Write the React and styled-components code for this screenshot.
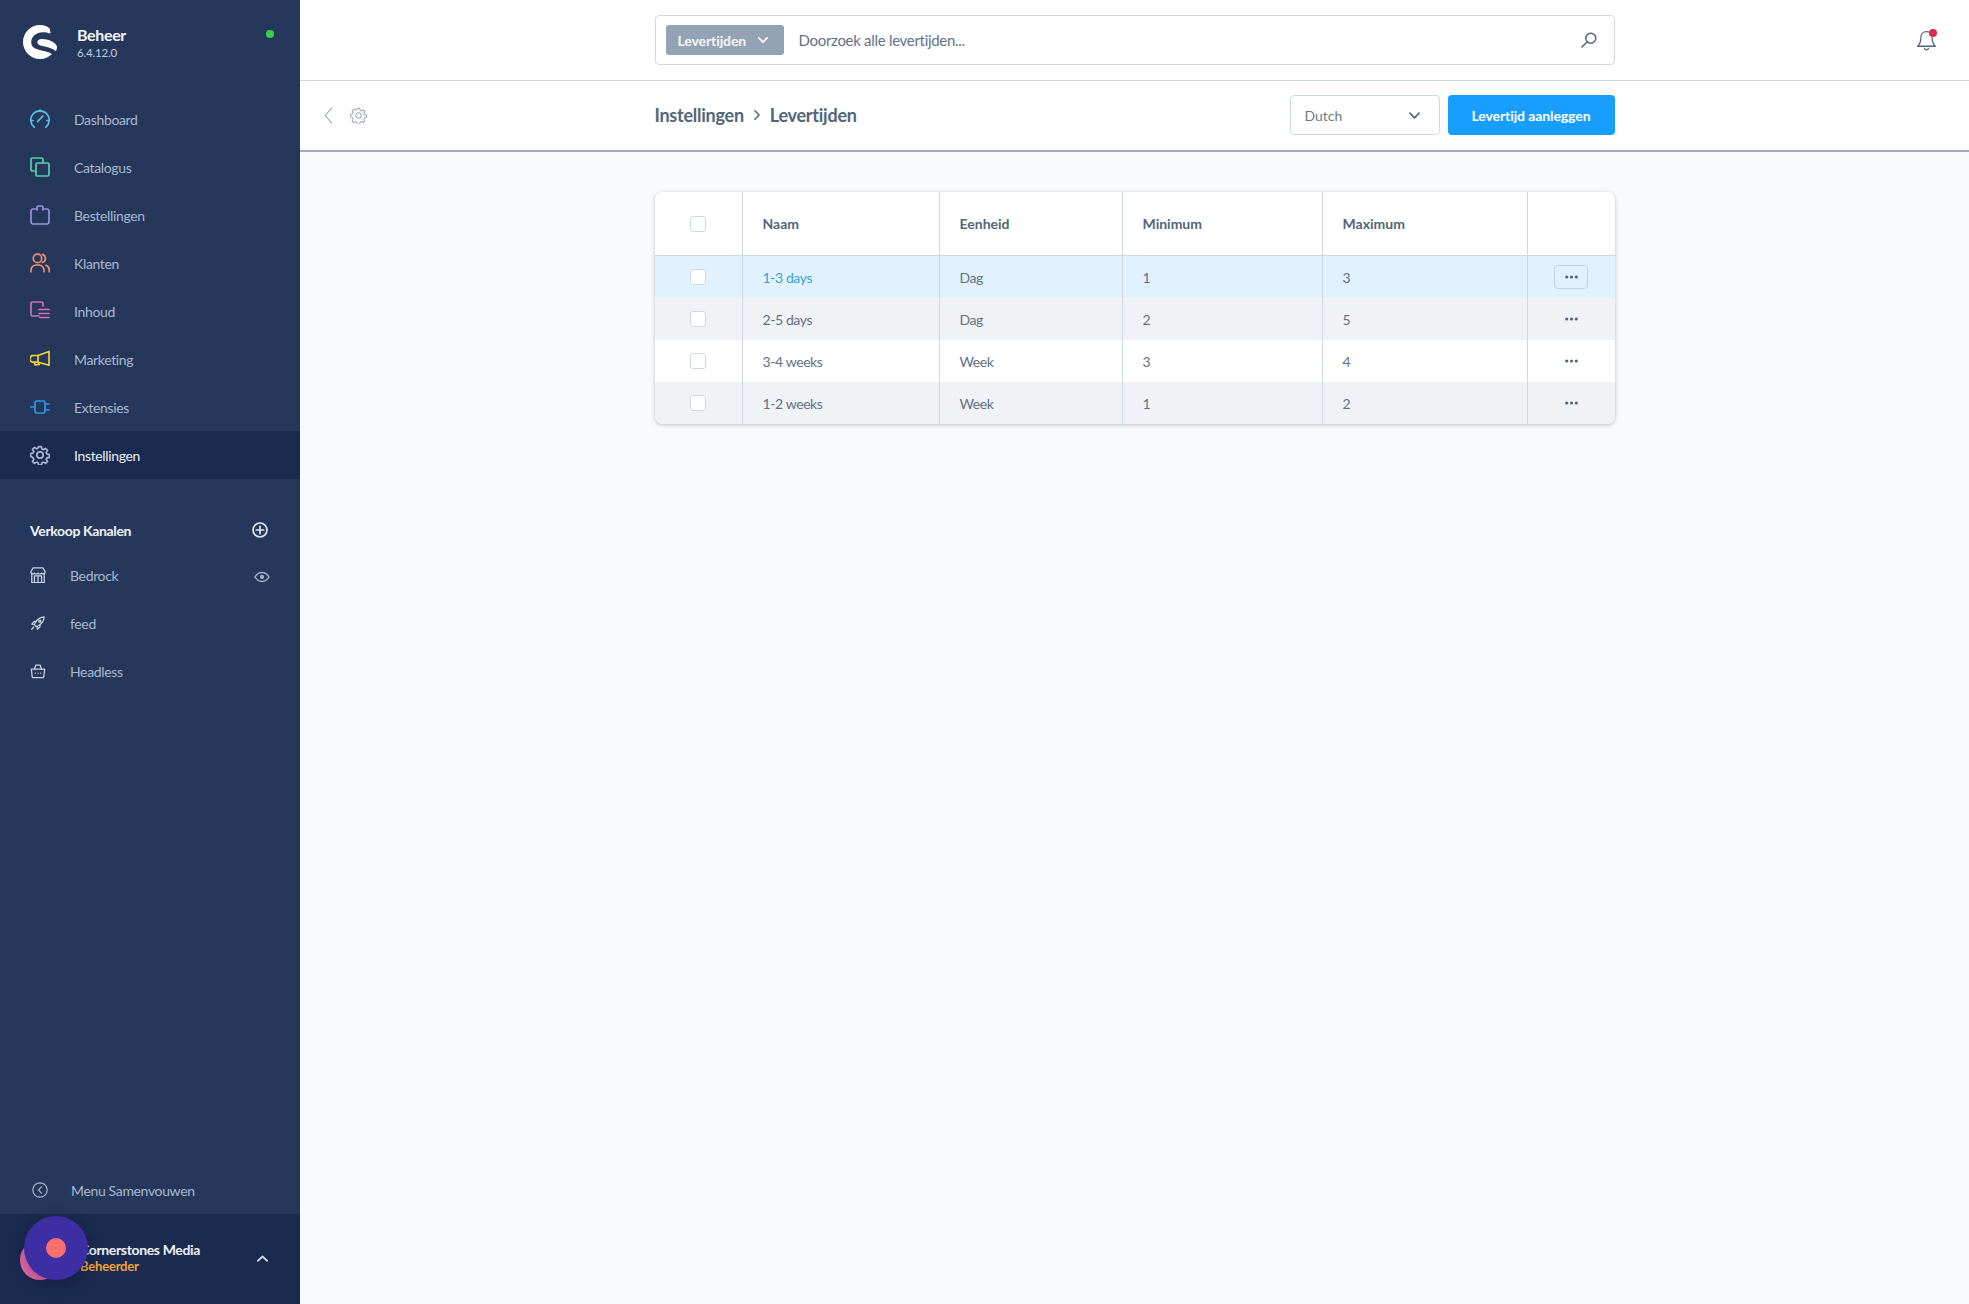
import React from "react";
import styled, { createGlobalStyle } from "styled-components";

const columns = "88px 197px 183px 200px 205px 87px";

const rows = [
  { naam: "1-3 days", eenheid: "Dag", min: 1, max: 3, hover: true },
  { naam: "2-5 days", eenheid: "Dag", min: 2, max: 5 },
  { naam: "3-4 weeks", eenheid: "Week", min: 3, max: 4 },
  { naam: "1-2 weeks", eenheid: "Week", min: 1, max: 2 },
];

const GearPath = () => (
  <>
    <path d="M8.6 2h2.8l.5 2.4 1.5.7 2.1-1.3 2 2-1.3 2.1.7 1.5 2.4.5v2.8l-2.4.5-.7 1.5 1.3 2.1-2 2-2.1-1.3-1.5.7-.5 2.4H8.6l-.5-2.4-1.5-.7-2.1 1.3-2-2 1.3-2.1-.7-1.5L.7 11.7V8.9l2.4-.5.7-1.5-1.3-2.1 2-2 2.1 1.3 1.5-.7z" transform="translate(0 -.4)" />
    <circle cx="10" cy="10" r="3.2" />
  </>
);

const menuItems = [
  {
    label: "Dashboard",
    color: "#57c0e4",
    icon: (
      <>
        <path d="M4.2 18.2A9.2 9.2 0 1 1 15.8 18.2" />
        <path d="M1.5 11.5H3M17 11.5h1.5M10 1v1.5M7.6 12.6 13 6.8" />
      </>
    ),
  },
  {
    label: "Catalogus",
    color: "#57cfa7",
    icon: (
      <>
        <path d="M5 14H2.5A1.5 1.5 0 0 1 1 12.5v-10A1.5 1.5 0 0 1 2.5 1h9A1.5 1.5 0 0 1 13 2.5V6" />
        <rect x="6" y="6" width="13" height="13" rx="1.6" />
      </>
    ),
  },
  {
    label: "Bestellingen",
    color: "#9a90e0",
    icon: (
      <>
        <path d="M5.5 4H2.4L1 5.4v12.2L2.4 19h15.2l1.4-1.4V5.4L17.6 4h-3.1" />
        <path d="M7 5V2.4C7 1.5 7.6 1 8.4 1h3.2c.8 0 1.4.5 1.4 1.4V5" />
      </>
    ),
  },
  {
    label: "Klanten",
    color: "#ea9172",
    icon: (
      <>
        <circle cx="7.5" cy="5.4" r="4.2" />
        <path d="M1 18.8v-1.6A5.2 5.2 0 0 1 6.2 12h2.6a5.2 5.2 0 0 1 5.2 5.2v1.6" />
        <path d="M12.5 1.4a4.2 4.2 0 0 1 0 8M16 12.3a4.8 4.8 0 0 1 3.2 4.7v1.8" />
      </>
    ),
  },
  {
    label: "Inhoud",
    color: "#d36fb4",
    icon: (
      <>
        <path d="M9 15H2.5A1.5 1.5 0 0 1 1 13.5v-11A1.5 1.5 0 0 1 2.5 1h9A1.5 1.5 0 0 1 13 2.5V5" />
        <path d="M9 8.5h10M9 12.5h10M10 16.5h9" />
      </>
    ),
  },
  {
    label: "Marketing",
    color: "#f4d23f",
    icon: (
      <>
        <path d="M8 6.5 19 2.5v13.8L8 13.2H2.2L0 11.5v-3l2.2-2z" />
        <path d="M8 6.5v6.7M4 13.4l1.3 2.6 4-.6-1.1-2" />
      </>
    ),
  },
  {
    label: "Extensies",
    color: "#2d97e6",
    icon: (
      <>
        <rect x="5" y="4" width="10" height="12" rx="1.6" />
        <path d="M0 10h5M15 7h4M15 13h4" />
      </>
    ),
  },
  {
    label: "Instellingen",
    color: "#a8b7d0",
    active: true,
    icon: <GearPath />,
  },
];

const channels = [
  {
    label: "Bedrock",
    eye: true,
    icon: (
      <>
        <path d="M2 7v10.5h14V7" />
        <path d="M3.5 1h11L17 5.2a2.2 2.2 0 0 1-4 1.6 2.4 2.4 0 0 1-4 0 2.4 2.4 0 0 1-4 0 2.2 2.2 0 0 1-4-1.6z" />
        <path d="M5 17.5V10h8v7.5M9 10v7.5" />
      </>
    ),
  },
  {
    label: "feed",
    icon: (
      <>
        <path d="M6.5 12.5 4.8 10.8C6.5 6 10.5 2.5 16 2c-.4 5.400-3.900 9.300-8.700 11z" />
        <path d="M5 10.500 2 10.200 4.800 7.200l2.500.2M8 13l.3 3 3-2.800-.2-2.500M4.200 13.500 2 16" />
        <circle cx="11" cy="7" r="1.200" />
      </>
    ),
  },
  {
    label: "Headless",
    icon: (
      <>
        <path d="M1.500 7h15l-1 8.600a1 1 0 0 1-1 .9H3.500a1 1 0 0 1-1-.9z" />
        <path d="M5 7 6.500 2.500h5L13 7M6 11.500h.01M9 11.500h.01M12 11.500h.01" />
      </>
    ),
  },
];

export default function App() {
  return (
    <>
      <GlobalStyle />
      <Page>
        <Sidebar>
          <Brand>
            <Logo viewBox="0 0 34 34" aria-hidden="true">
              <path d="M26.500 3.200C23.800 1.100 20.600 0 17 0 7.600 0 0 7.600 0 17s7.600 17 17 17c4.700 0 8.900-1.900 12-5-3.500-2-8.300-3-13-4.200-4.600-1.200-7.800-3.100-7.800-7.600C8.200 11.500 13.500 7.200 19.800 7.200c2.600 0 5.200.5 7 1.200.6.200.9-.3.700-.8z" />
              <path d="M14.300 17.200c0-2 1.800-3.300 4.500-3.300 6.200 0 15.200 3.500 15.200 8.200 0 1.600-.5 3-1.100 4-3.600-2.800-7.800-3.800-12.200-4.800-3.700-.8-6.400-1.900-6.400-4.100z" />
            </Logo>
            <BrandText>
              <BrandName>Beheer</BrandName>
              <BrandVersion>6.4.12.0</BrandVersion>
            </BrandText>
            <StatusDot />
          </Brand>

          <Menu>
            {menuItems.map((item) => (
              <MenuItem key={item.label} $active={item.active}>
                <MenuIcon viewBox="0 0 20 20" $color={item.color}>
                  {item.icon}
                </MenuIcon>
                {item.label}
              </MenuItem>
            ))}
          </Menu>

          <ChannelHeading>
            Verkoop Kanalen
            <PlainIcon viewBox="0 0 16 16" $size={16} $color="#dfe6f1" $weight={1.7}>
              <circle cx="8" cy="8" r="7" />
              <path d="M8 4.300v7.400M4.300 8h7.400" />
            </PlainIcon>
          </ChannelHeading>

          {channels.map((channel) => (
            <Channel key={channel.label}>
              <PlainIcon viewBox="0 0 18 18" $size={16} $color="#c9d5e8" $weight={1.4}>
                {channel.icon}
              </PlainIcon>
              <ChannelLabel>{channel.label}</ChannelLabel>
              {channel.eye && (
                <EyeIcon viewBox="0 0 16 12" $size={16} $color="#9fb0cb" $weight={1.5}>
                  <path d="M1 6c1.700-3 4-4.500 7-4.500S13.300 3 15 6c-1.700 3-4 4.500-7 4.500S2.700 9 1 6z" />
                  <circle cx="8" cy="6" r="1.400" fill="#9fb0cb" />
                </EyeIcon>
              )}
            </Channel>
          ))}

          <Spacer />

          <Collapse>
            <PlainIcon viewBox="0 0 16 16" $size={16} $color="#a8b7d0" $weight={1.2}>
              <circle cx="8" cy="8" r="7.200" />
              <path d="M9.500 4.800 6.500 8l3 3.200" />
            </PlainIcon>
            Menu Samenvouwen
          </Collapse>

          <UserBar>
            <UserAvatar />
            <UserText>
              <UserName>Cornerstones Media</UserName>
              <UserRole>Beheerder</UserRole>
            </UserText>
            <PlainIcon viewBox="0 0 12 8" $size={11} $color="#c9d5e8" $weight={2}>
              <path d="M1 6.500 6 1.800l5 4.700" />
            </PlainIcon>
          </UserBar>
        </Sidebar>

        <Main>
          <TopBar>
            <SearchBox>
              <SearchType>
                Levertijden
                <PlainIcon viewBox="0 0 12 8" $size={10} $color="#fff" $weight={2}>
                  <path d="M1 1.500 6 6.500l5-5" />
                </PlainIcon>
              </SearchType>
              <SearchInput placeholder="Doorzoek alle levertijden..." />
              <PlainIcon viewBox="0 0 16 16" $size={16} $color="#52667a" $weight={1.500}>
                <circle cx="9.800" cy="6.200" r="5" />
                <path d="M6.200 9.800 1 15" />
              </PlainIcon>
            </SearchBox>
            <BellCell>
              <BellWrap>
                <PlainIcon viewBox="0 0 20 22" $size={23} $color="#52667a" $weight={1.200}>
                  <path d="M10 2.500c-3.400 0-5.400 2.600-5.400 5.800 0 4.400-1.100 6.400-3.100 8.200h17c-2-1.800-3.100-3.800-3.100-8.200 0-3.200-2-5.800-5.400-5.800zM8 18.500c.4 1 1.100 1.500 2 1.500s1.600-.5 2-1.500" />
                </PlainIcon>
                <BellBadge />
              </BellWrap>
            </BellCell>
          </TopBar>

          <SmartBar>
            <BackCell>
              <PlainIcon viewBox="0 0 10 18" $size={17} $color="#9aa8b5" $weight={1.200}>
                <path d="M8.500 1 1.500 9l7 8" />
              </PlainIcon>
              <PlainIcon viewBox="0 0 20 20" $size={17} $color="#9aa8b5" $weight={1.200}>
                <GearPath />
              </PlainIcon>
            </BackCell>
            <SmartInner>
              <Crumbs>
                Instellingen
                <PlainIcon viewBox="0 0 8 12" $size={10} $color="#52667a" $weight={1.800}>
                  <path d="M1.500 1 6.500 6l-5 5" />
                </PlainIcon>
                Levertijden
              </Crumbs>
              <LangSelect>
                Dutch
                <PlainIcon viewBox="0 0 12 8" $size={11} $color="#52667a" $weight={1.800}>
                  <path d="M1 1.500 6 6.500l5-5" />
                </PlainIcon>
              </LangSelect>
              <PrimaryButton>Levertijd aanleggen</PrimaryButton>
            </SmartInner>
          </SmartBar>

          <Content>
            <Card>
              <HeadRow>
                <CheckCell><CheckBox /></CheckCell>
                <HeadCell>Naam</HeadCell>
                <HeadCell>Eenheid</HeadCell>
                <HeadCell>Minimum</HeadCell>
                <HeadCell>Maximum</HeadCell>
                <ActionCell />
              </HeadRow>
              {rows.map((row, i) => (
                <BodyRow key={row.naam} $hover={row.hover} $even={i % 2 === 1}>
                  <CheckCell><CheckBox /></CheckCell>
                  <Cell $link={row.hover}>{row.naam}</Cell>
                  <Cell>{row.eenheid}</Cell>
                  <Cell>{row.min}</Cell>
                  <Cell>{row.max}</Cell>
                  <ActionCell>
                    <DotsButton $outlined={row.hover}>
                      <svg viewBox="0 0 13 4" width="13" height="4" fill="#52667a">
                        <circle cx="1.700" cy="2" r="1.600" />
                        <circle cx="6.500" cy="2" r="1.600" />
                        <circle cx="11.300" cy="2" r="1.600" />
                      </svg>
                    </DotsButton>
                  </ActionCell>
                </BodyRow>
              ))}
            </Card>
          </Content>
        </Main>

        <ChatBubble>
          <ChatDot />
        </ChatBubble>
      </Page>
    </>
  );
}

const GlobalStyle = createGlobalStyle`
  html, body {
    margin: 0;
    padding: 0;
    height: 100%;
  }
  body {
    font-family: "Lato", "Open Sans", sans-serif;
    font-size: 14px;
    color: #52667a;
    background: #f9fafb;
  }
  * {
    box-sizing: border-box;
  }
`;

const Page = styled.div`
  display: grid;
  grid-template-columns: 300px 1fr;
  height: 100vh;
  overflow: hidden;
`;

const Sidebar = styled.aside`
  display: flex;
  flex-direction: column;
  background: #25375a;
  color: #a8b7d0;
  letter-spacing: -0.35px;
`;

const Brand = styled.div`
  display: flex;
  align-items: flex-start;
  height: 95px;
  padding: 25px 26px 0 23px;
`;

const Logo = styled.svg`
  width: 34px;
  height: 34px;
  fill: #fff;
  flex: none;
`;

const BrandText = styled.div`
  margin-left: 20px;
  flex: 1;
`;

const BrandName = styled.div`
  color: #f4f6fa;
  font-size: 16px;
  font-weight: 700;
  line-height: 20px;
`;

const BrandVersion = styled.div`
  font-size: 11.5px;
  line-height: 15px;
  letter-spacing: -0.2px;
  color: #c2cddd;
`;

const StatusDot = styled.span`
  width: 8px;
  height: 8px;
  margin-top: 5px;
  border-radius: 50%;
  background: #37d046;
`;

const Menu = styled.nav`
  display: flex;
  flex-direction: column;
`;

const MenuItem = styled.a`
  display: flex;
  align-items: center;
  gap: 24px;
  height: 48px;
  padding-left: 30px;
  color: ${(p) => (p.$active ? "#e9eef6" : "#a8b7d0")};
  background: ${(p) => (p.$active ? "#1a2b4f" : "transparent")};
`;

const MenuIcon = styled.svg`
  width: 20px;
  height: 20px;
  flex: none;
  fill: none;
  stroke: ${(p) => p.$color};
  stroke-width: 1.7;
  stroke-linecap: round;
  stroke-linejoin: round;
`;

const PlainIcon = styled.svg`
  width: ${(p) => p.$size}px;
  height: ${(p) => p.$size}px;
  flex: none;
  fill: none;
  stroke: ${(p) => p.$color};
  stroke-width: ${(p) => p.$weight};
  stroke-linecap: round;
  stroke-linejoin: round;
`;

const ChannelHeading = styled.div`
  display: flex;
  align-items: center;
  justify-content: space-between;
  height: 24px;
  margin: 39px 0 9px;
  padding: 0 32px 0 30px;
  font-weight: 700;
  color: #f0f3f8;
`;

const Channel = styled.a`
  display: flex;
  align-items: center;
  gap: 24px;
  height: 48px;
  padding: 0 30px;
`;

const ChannelLabel = styled.span`
  flex: 1;
`;

const EyeIcon = styled(PlainIcon)`
  margin-top: 4px;
`;

const Spacer = styled.div`
  flex: 1;
`;

const Collapse = styled.a`
  display: flex;
  align-items: center;
  gap: 23px;
  height: 48px;
  padding-left: 32px;
`;

const UserBar = styled.div`
  display: flex;
  align-items: center;
  height: 90px;
  padding: 0 32px 2px 20px;
  background: #1a2b4f;
`;

const UserAvatar = styled.div`
  width: 40px;
  height: 40px;
  margin-top: 4px;
  flex: none;
  border-radius: 50%;
  background: #e96aae;
`;

const UserText = styled.div`
  flex: 1;
  margin-left: 20px;
`;

const UserName = styled.div`
  font-weight: 700;
  line-height: 17px;
  color: #eef2f7;
`;

const UserRole = styled.div`
  font-size: 13px;
  font-weight: 700;
  line-height: 17px;
  letter-spacing: -0.2px;
  color: #f0a33a;
`;

const Main = styled.main`
  display: flex;
  flex-direction: column;
  min-width: 0;
`;

const TopBar = styled.header`
  display: grid;
  grid-template-columns: 1fr 960px 1fr;
  align-items: center;
  height: 81px;
  background: #fff;
  border-bottom: 1px solid #d1d9e0;

  > :first-child {
    grid-column: 2;
  }
`;

const SearchBox = styled.div`
  display: flex;
  align-items: center;
  height: 50px;
  padding: 0 17px 0 10px;
  border: 1px solid #d1d9e0;
  border-radius: 4px;
  background: #fff;
`;

const SearchType = styled.div`
  display: flex;
  align-items: center;
  justify-content: space-between;
  width: 118px;
  height: 30px;
  padding: 0 16px 0 12px;
  border-radius: 3px;
  background: #94a3b3;
  color: #f4f6f8;
  font-size: 14px;
  font-weight: 700;
  letter-spacing: -0.1px;
  flex: none;
`;

const SearchInput = styled.input`
  flex: 1;
  min-width: 0;
  height: 100%;
  margin-left: 15px;
  padding: 0;
  border: none;
  outline: none;
  background: transparent;
  font: inherit;
  font-size: 15px;
  letter-spacing: -0.3px;
  color: #52667a;

  &::placeholder {
    color: #5f7285;
    opacity: 1;
  }
`;

const BellCell = styled.div`
  display: flex;
  justify-content: flex-end;
  padding-right: 31px;
`;

const BellWrap = styled.div`
  position: relative;
  width: 23px;
  height: 23px;
`;

const BellBadge = styled.span`
  position: absolute;
  top: 0;
  right: 1px;
  width: 8px;
  height: 8px;
  border-radius: 50%;
  background: #de294c;
`;

const SmartBar = styled.div`
  display: grid;
  grid-template-columns: 1fr 960px 1fr;
  align-items: center;
  height: 71px;
  padding-bottom: 1px;
  background: #fff;
  border-bottom: 2px solid #a2adb8;
`;

const BackCell = styled.div`
  display: flex;
  align-items: center;
  gap: 13px;
  padding-left: 20px;
`;

const SmartInner = styled.div`
  display: flex;
  align-items: center;
`;

const Crumbs = styled.div`
  display: flex;
  align-items: center;
  flex: 1;
  gap: 8px;
  font-size: 18px;
  font-weight: 700;
  letter-spacing: -0.25px;
  color: #52667a;
`;

const LangSelect = styled.div`
  display: flex;
  align-items: center;
  justify-content: space-between;
  width: 150px;
  height: 40px;
  padding: 0 19px 0 14px;
  border: 1px solid #d1d9e0;
  border-radius: 4px;
  background: #fff;
  color: #6b7c8e;
`;

const PrimaryButton = styled.button`
  width: 167px;
  height: 40px;
  margin-left: 8px;
  padding: 0;
  border: none;
  border-radius: 4px;
  background: #189eff;
  color: #fff;
  font: inherit;
  font-weight: 700;
  letter-spacing: -0.1px;
  cursor: pointer;
`;

const Content = styled.div`
  flex: 1;
  display: flex;
  justify-content: center;
  padding-top: 40px;
  background: #f9fafb;
`;

const Card = styled.div`
  width: 960px;
  align-self: flex-start;
  border-radius: 8px;
  overflow: hidden;
  background: #fff;
  box-shadow: 0 1px 4px rgba(70, 85, 105, 0.35);
`;

const HeadRow = styled.div`
  display: grid;
  grid-template-columns: ${columns};
  height: 64px;
  border-bottom: 1px solid #d1d9e0;
  background: #fff;

  > * {
    border-right: 1px solid #d1d9e0;
  }
  > :last-child {
    border-right: none;
  }
`;

const BodyRow = styled.div`
  display: grid;
  grid-template-columns: ${columns};
  height: 42px;
  background: ${(p) => (p.$hover ? "#e1f1fd" : p.$even ? "#f0f2f5" : "#fff")};

  > * {
    border-right: 1px solid #d1d9e0;
  }
  > :last-child {
    border-right: none;
  }
`;

const CheckCell = styled.div`
  display: flex;
  align-items: center;
  justify-content: center;
`;

const CheckBox = styled.span`
  width: 16px;
  height: 16px;
  border: 1px solid #d1d9e0;
  border-radius: 3px;
  background: #fff;
`;

const HeadCell = styled.div`
  display: flex;
  align-items: center;
  padding-left: 20px;
  font-weight: 700;
  color: #52667a;
`;

const Cell = styled.div`
  display: flex;
  align-items: center;
  padding-left: 20px;
  letter-spacing: -0.4px;
  color: ${(p) => (p.$link ? "#38a3d0" : "#5f7285")};
`;

const ActionCell = styled.div`
  display: flex;
  align-items: center;
  justify-content: center;
`;

const DotsButton = styled.button`
  display: flex;
  align-items: center;
  justify-content: center;
  width: 34px;
  height: 24px;
  padding: 0;
  border: 1px solid ${(p) => (p.$outlined ? "#c5d3e0" : "transparent")};
  border-radius: 4px;
  background: transparent;
`;

const ChatBubble = styled.div`
  position: fixed;
  left: 24px;
  bottom: 24px;
  display: flex;
  align-items: center;
  justify-content: center;
  width: 64px;
  height: 64px;
  border-radius: 50%;
  background: #3d2ea6;
  box-shadow: 0 4px 14px rgba(10, 15, 40, 0.35);
`;

const ChatDot = styled.span`
  width: 20px;
  height: 20px;
  border-radius: 50%;
  background: #fb6f6f;
`;
